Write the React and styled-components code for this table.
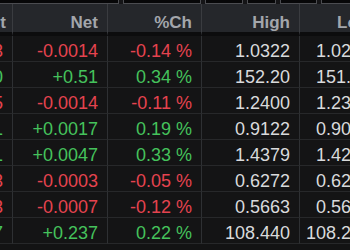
import React from 'react'
import styled, { createGlobalStyle } from 'styled-components'

const GlobalStyle = createGlobalStyle`
  html, body {
    margin: 0;
    padding: 0;
    background: #131314;
    overflow: hidden;
  }
  body {
    font-family: "Liberation Sans", Arial, sans-serif;
  }
`

const rows = [
  { last: '1.0303', net: '-0.0014', pct: '-0.14 %', high: '1.0322', low: '1.0298', up: false },
  { last: '151.90', net: '+0.51', pct: '0.34 %', high: '152.20', low: '151.40', up: true },
  { last: '1.2385', net: '-0.0014', pct: '-0.11 %', high: '1.2400', low: '1.2355', up: false },
  { last: '0.9111', net: '+0.0017', pct: '0.19 %', high: '0.9122', low: '0.9057', up: true },
  { last: '1.4361', net: '+0.0047', pct: '0.33 %', high: '1.4379', low: '1.4255', up: true },
  { last: '0.6253', net: '-0.0003', pct: '-0.05 %', high: '0.6272', low: '0.6235', up: false },
  { last: '0.5633', net: '-0.0007', pct: '-0.12 %', high: '0.5663', low: '0.5625', up: false },
  { last: '108.407', net: '+0.237', pct: '0.22 %', high: '108.440', low: '108.205', up: true },
]

const toolButtons = [119, 78, 38, 29, 37, 40]

function App() {
  return (
    <Page>
      <GlobalStyle />
      <Toolbar>
        {toolButtons.map((w, i) => (
          <ToolBox key={i} $w={w} $first={i === 0} />
        ))}
      </Toolbar>
      <Grid>
        <HeadCell $pad={6}>Last</HeadCell>
        <HeadCell>Net</HeadCell>
        <HeadCell>%Ch</HeadCell>
        <HeadCell>High</HeadCell>
        <HeadCell $last>Low</HeadCell>
        {rows.map((r, i) => (
          <React.Fragment key={i}>
            <Cell $tone={r.up ? 'up' : 'down'}>{r.last}</Cell>
            <Cell $tone={r.up ? 'up' : 'down'}>{r.net}</Cell>
            <Cell $tone={r.up ? 'up' : 'down'}>{r.pct}</Cell>
            <Cell>{r.high}</Cell>
            <Cell $last>{r.low}</Cell>
          </React.Fragment>
        ))}
      </Grid>
    </Page>
  )
}

export default App

const Page = styled.div`
  width: 350px;
  height: 250px;
  overflow: hidden;
  background: #131314;
`

const Toolbar = styled.div`
  display: flex;
  gap: 4px;
  height: 4px;
  background: #151517;
`

const ToolBox = styled.div`
  flex: 0 0 ${p => p.$w}px;
  box-sizing: border-box;
  height: 4px;
  background: #070708;
  border: 1px solid #4b4c50;
  border-top: none;
  border-left: ${p => (p.$first ? 'none' : '1px solid #4b4c50')};
`

const Grid = styled.div`
  display: grid;
  grid-template-columns: 13px 95px 94px 98px 80px;
  width: 380px;
`

const HeadCell = styled.div`
  box-sizing: border-box;
  height: 32px;
  padding: 9px ${p => p.$pad ?? 9}px 0 0;
  line-height: 20px;
  font-size: 17px;
  font-weight: bold;
  color: #a3a6ab;
  background: #25272b;
  border-bottom: 4px solid #0c0c0d;
  border-right: ${p => (p.$last ? 'none' : '1px solid #3a3c40')};
  display: flex;
  justify-content: flex-end;
  white-space: nowrap;
  overflow: hidden;
`

const toneColor = {
  up: '#45c25c',
  down: '#e5434f',
}

const Cell = styled.div`
  box-sizing: border-box;
  height: 26px;
  padding: 5px 9px 0 0;
  line-height: 20px;
  font-size: 18px;
  color: ${p => toneColor[p.$tone] || '#d9dadc'};
  background: #141415;
  border-bottom: 1px solid #27282a;
  border-right: ${p => (p.$last ? 'none' : '1px solid #2e3033')};
  display: flex;
  justify-content: flex-end;
  white-space: nowrap;
  overflow: hidden;
`
